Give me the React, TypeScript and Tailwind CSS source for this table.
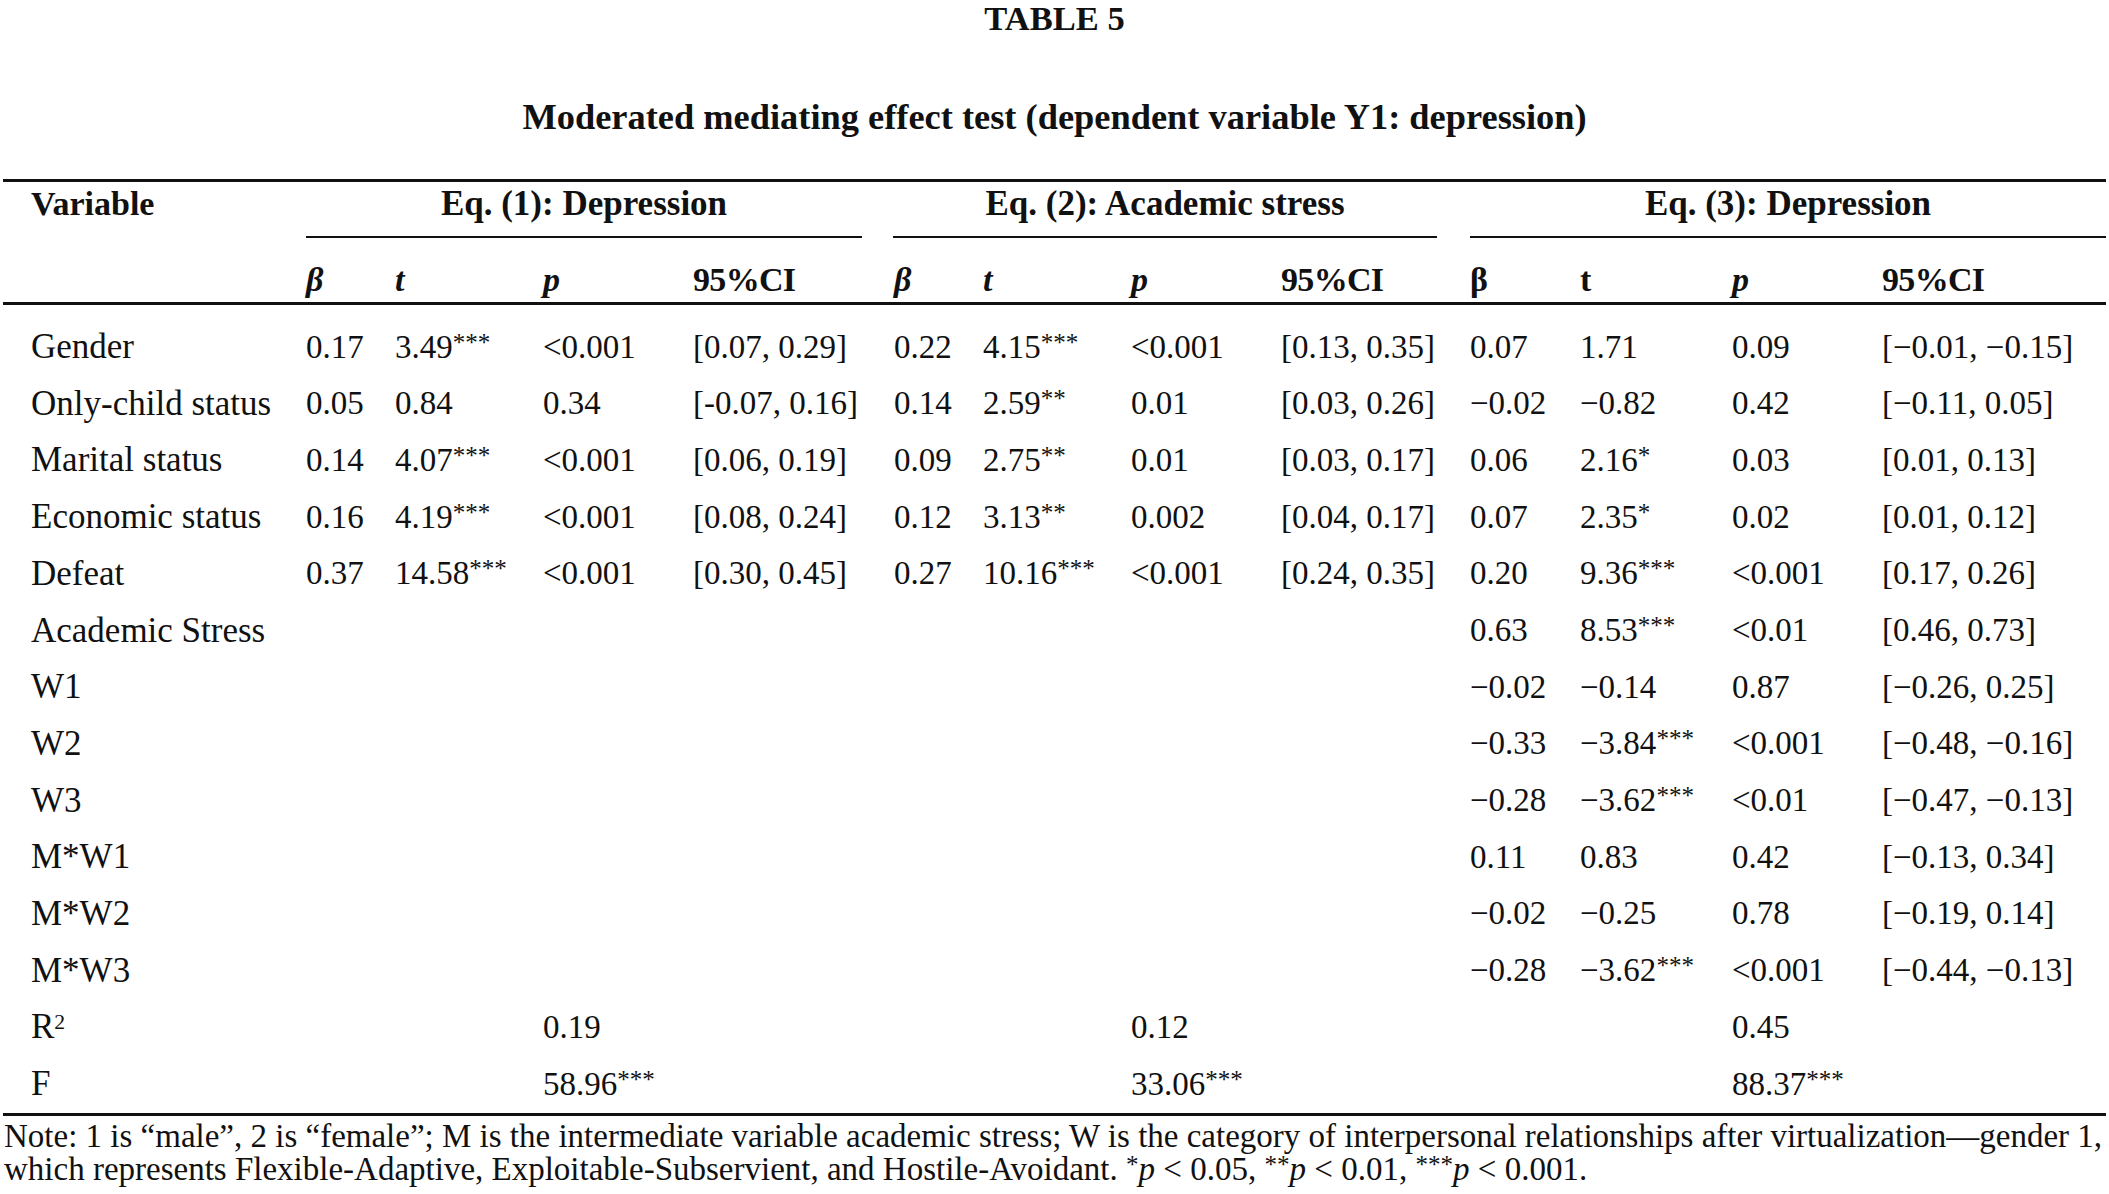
import React from 'react';

type Cells = string[] | null;

const cols =
  'grid grid-cols-[303px_89px_148px_150px_201px_89px_148px_150px_189px_110px_152px_150px_224px]';

const rows: { label: React.ReactNode; eq1: Cells; eq2: Cells; eq3: Cells }[] = [
  { label: 'Gender', eq1: ['0.17', '3.49***', '<0.001', '[0.07, 0.29]'], eq2: ['0.22', '4.15***', '<0.001', '[0.13, 0.35]'], eq3: ['0.07', '1.71', '0.09', '[−0.01, −0.15]'] },
  { label: 'Only-child status', eq1: ['0.05', '0.84', '0.34', '[-0.07, 0.16]'], eq2: ['0.14', '2.59**', '0.01', '[0.03, 0.26]'], eq3: ['−0.02', '−0.82', '0.42', '[−0.11, 0.05]'] },
  { label: 'Marital status', eq1: ['0.14', '4.07***', '<0.001', '[0.06, 0.19]'], eq2: ['0.09', '2.75**', '0.01', '[0.03, 0.17]'], eq3: ['0.06', '2.16*', '0.03', '[0.01, 0.13]'] },
  { label: 'Economic status', eq1: ['0.16', '4.19***', '<0.001', '[0.08, 0.24]'], eq2: ['0.12', '3.13**', '0.002', '[0.04, 0.17]'], eq3: ['0.07', '2.35*', '0.02', '[0.01, 0.12]'] },
  { label: 'Defeat', eq1: ['0.37', '14.58***', '<0.001', '[0.30, 0.45]'], eq2: ['0.27', '10.16***', '<0.001', '[0.24, 0.35]'], eq3: ['0.20', '9.36***', '<0.001', '[0.17, 0.26]'] },
  { label: 'Academic Stress', eq1: null, eq2: null, eq3: ['0.63', '8.53***', '<0.01', '[0.46, 0.73]'] },
  { label: 'W1', eq1: null, eq2: null, eq3: ['−0.02', '−0.14', '0.87', '[−0.26, 0.25]'] },
  { label: 'W2', eq1: null, eq2: null, eq3: ['−0.33', '−3.84***', '<0.001', '[−0.48, −0.16]'] },
  { label: 'W3', eq1: null, eq2: null, eq3: ['−0.28', '−3.62***', '<0.01', '[−0.47, −0.13]'] },
  { label: 'M*W1', eq1: null, eq2: null, eq3: ['0.11', '0.83', '0.42', '[−0.13, 0.34]'] },
  { label: 'M*W2', eq1: null, eq2: null, eq3: ['−0.02', '−0.25', '0.78', '[−0.19, 0.14]'] },
  { label: 'M*W3', eq1: null, eq2: null, eq3: ['−0.28', '−3.62***', '<0.001', '[−0.44, −0.13]'] },
  {
    label: (
      <>
        R<span className="relative -top-[0.45em] text-[0.62em]">2</span>
      </>
    ),
    eq1: ['', '', '0.19', ''],
    eq2: ['', '', '0.12', ''],
    eq3: ['', '', '0.45', ''],
  },
  { label: 'F', eq1: ['', '', '58.96***', ''], eq2: ['', '', '33.06***', ''], eq3: ['', '', '88.37***', ''] },
];

// number with trailing significance stars as superscript
const Val = ({ v }: { v: string }) => {
  const m = v.match(/^(.*?)(\*+)$/);
  if (!m) return <>{v}</>;
  return (
    <>
      {m[1]}
      <span className="relative -top-[0.28em] text-[0.76em]">{m[2]}</span>
    </>
  );
};

const Group = ({ cells }: { cells: Cells }) => (
  <>
    {[0, 1, 2, 3].map((i) => (
      <div key={i} className="whitespace-nowrap text-[33px]">
        {cells && cells[i] ? <Val v={cells[i]} /> : null}
      </div>
    ))}
  </>
);

export default function App() {
  return (
    <div className="h-[1194px] w-[2109px] overflow-hidden bg-white font-['Liberation_Serif',serif] text-[#111]">
      <h1 className="text-center text-[34.5px] font-bold leading-[36px]">TABLE 5</h1>
      <h2 className="mt-[63px] text-center text-[36.4px] font-bold leading-[36px]">
        Moderated mediating effect test (dependent variable Y1: depression)
      </h2>

      <div className="mt-[44px] px-[3px]">
        <div className="h-[3px] bg-[#111]" />

        {/* HEADER */}
        <div className={cols + ' font-bold text-[34px]'}>
          <div className="pl-[28px] leading-[44px]">Variable</div>
          <div className="col-span-4 mr-[32px]">
            <div className="text-center text-[35px] leading-[44px]">Eq. (1): Depression</div>
            <div className="mt-[10px] h-[2px] bg-[#111]" />
          </div>
          <div className="col-span-4 mr-[33px] -ml-[1px]">
            <div className="text-center text-[35px] leading-[44px]">Eq. (2): Academic stress</div>
            <div className="mt-[10px] h-[2px] bg-[#111]" />
          </div>
          <div className="col-span-4">
            <div className="text-center text-[35px] leading-[44px]">Eq. (3): Depression</div>
            <div className="mt-[10px] h-[2px] bg-[#111]" />
          </div>
        </div>

        <div className={cols + ' pt-[20px] font-bold text-[34px] leading-[44px]'}>
          <div />
          <div className="italic">β</div>
          <div className="italic">t</div>
          <div className="italic">p</div>
          <div className="tracking-[-0.02em]">95%CI</div>
          <div className="italic">β</div>
          <div className="italic">t</div>
          <div className="italic">p</div>
          <div className="tracking-[-0.02em]">95%CI</div>
          <div>β</div>
          <div>t</div>
          <div className="italic">p</div>
          <div className="tracking-[-0.02em]">95%CI</div>
        </div>
        <div className="h-[3px] bg-[#111]" />

        {/* BODY */}
        <div className="pt-[14px]">
          {rows.map((r, i) => (
            <div key={i} className={cols + ' h-[56.7px] items-center'}>
              <div className="whitespace-nowrap pl-[28px] text-[35px]">{r.label}</div>
              <Group cells={r.eq1} />
              <Group cells={r.eq2} />
              <Group cells={r.eq3} />
            </div>
          ))}
        </div>
        <div className="h-[3px] bg-[#111]" />
      </div>

      {/* NOTE */}
      <div className="mt-[4px] pl-[4px] text-[33px] leading-[33px] whitespace-nowrap">
        <div>
          Note: 1 is “male”, 2 is “female”; M is the intermediate variable academic stress; W is the category of
          interpersonal relationships after virtualization—gender 1,
        </div>
        <div>
          which represents Flexible-Adaptive, Exploitable-Subservient, and Hostile-Avoidant.{' '}
          <span className="relative -top-[0.28em] text-[0.76em]">*</span>
          <span className="italic">p</span> &lt; 0.05,{' '}
          <span className="relative -top-[0.28em] text-[0.76em]">**</span>
          <span className="italic">p</span> &lt; 0.01,{' '}
          <span className="relative -top-[0.28em] text-[0.76em]">***</span>
          <span className="italic">p</span> &lt; 0.001.
        </div>
      </div>
    </div>
  );
}
